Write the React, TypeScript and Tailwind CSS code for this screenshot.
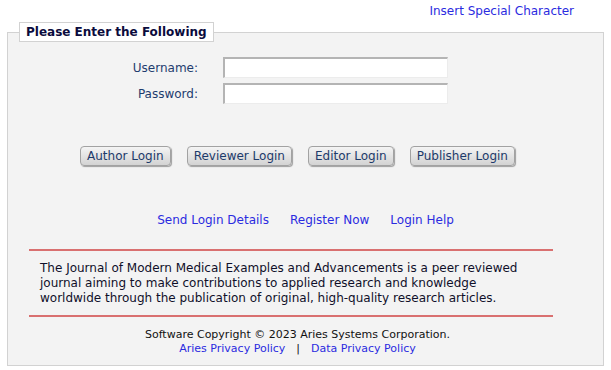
import React from "react";

const buttons = ["Author Login", "Reviewer Login", "Editor Login", "Publisher Login"];
const links = ["Send Login Details", "Register Now", "Login Help"];

function Field({ label, type }: { label: string; type: string }) {
  return (
    <div className="flex items-center">
      <label className="w-[190px] text-right text-[#1e3c6e] leading-[14px]">{label}</label>
      <input
        type={type}
        className="ml-[25px] w-[225px] h-[21px] bg-white border-t-2 border-l-2 border-r border-b border-t-[#b4b4b4] border-l-[#b4b4b4] border-r-[#ececec] border-b-[#ececec] outline-none"
      />
    </div>
  );
}

export default function App() {
  return (
    <div className="font-['DejaVu_Sans',Verdana,sans-serif] text-[12px] bg-white min-h-[370px]">
      <div className="flex justify-end pr-[37px] pt-[4px] h-[18px] leading-[14px]">
        <a href="#" className="text-[#2b2be0]">
          Insert Special Character
        </a>
      </div>
      <fieldset className="mx-[7px] mt-[4px] border border-[#d2d2d2] bg-[#f3f3f3] pb-[9px]">
        <legend className="ml-[11px] h-[20px] px-[6px] border border-[#d2d2d2] bg-white font-bold text-[#0b0b3d] leading-[18px]">
          Please Enter the Following
        </legend>

        <div className="mt-[15px] flex flex-col gap-[5px]">
          <Field label="Username:" type="text" />
          <Field label="Password:" type="password" />
        </div>

        <div className="ml-[21px] w-[537px]">
          <div className="mt-[42px] flex justify-center gap-[16px]">
            {buttons.map((b) => (
              <button
                key={b}
                className="h-[20px] px-[6px] rounded-[4px] border border-[#a2a2a2] bg-gradient-to-b from-[#f4f4f4] to-[#d3d3d3] text-[#1c3a6a] leading-[16px] shadow-[1px_1px_1px_rgba(0,0,0,0.35)]"
              >
                {b}
              </button>
            ))}
          </div>
        </div>

        <div className="mt-[47px] flex justify-center gap-[21px] leading-[14px]">
          {links.map((l) => (
            <a key={l} href="#" className="text-[#2b2be0]">
              {l}
            </a>
          ))}
        </div>

        <div className="ml-[21px] w-[537px]">
          <div className="mt-[22px] w-[524px] h-[2px] bg-[#d97070]" />
          <p className="mt-[10px] pl-[11px] text-[#10102a] leading-[15px]">
            The Journal of Modern Medical Examples and Advancements is a peer reviewed
            <br />
            journal aiming to make contributions to applied research and knowledge
            <br />
            worldwide through the publication of original, high-quality research articles.
          </p>
          <div className="mt-[9px] w-[524px] h-[2px] bg-[#d97070]" />
          <div className="mt-[11px] text-center text-[11px] leading-[14px] text-[#111]">
            <div>Software Copyright © 2023 Aries Systems Corporation.</div>
            <div className="flex justify-center gap-[11px]">
              <a href="#" className="text-[#2b2be0]">
                Aries Privacy Policy
              </a>
              <span>|</span>
              <a href="#" className="text-[#2b2be0]">
                Data Privacy Policy
              </a>
            </div>
          </div>
        </div>
      </fieldset>
    </div>
  );
}
